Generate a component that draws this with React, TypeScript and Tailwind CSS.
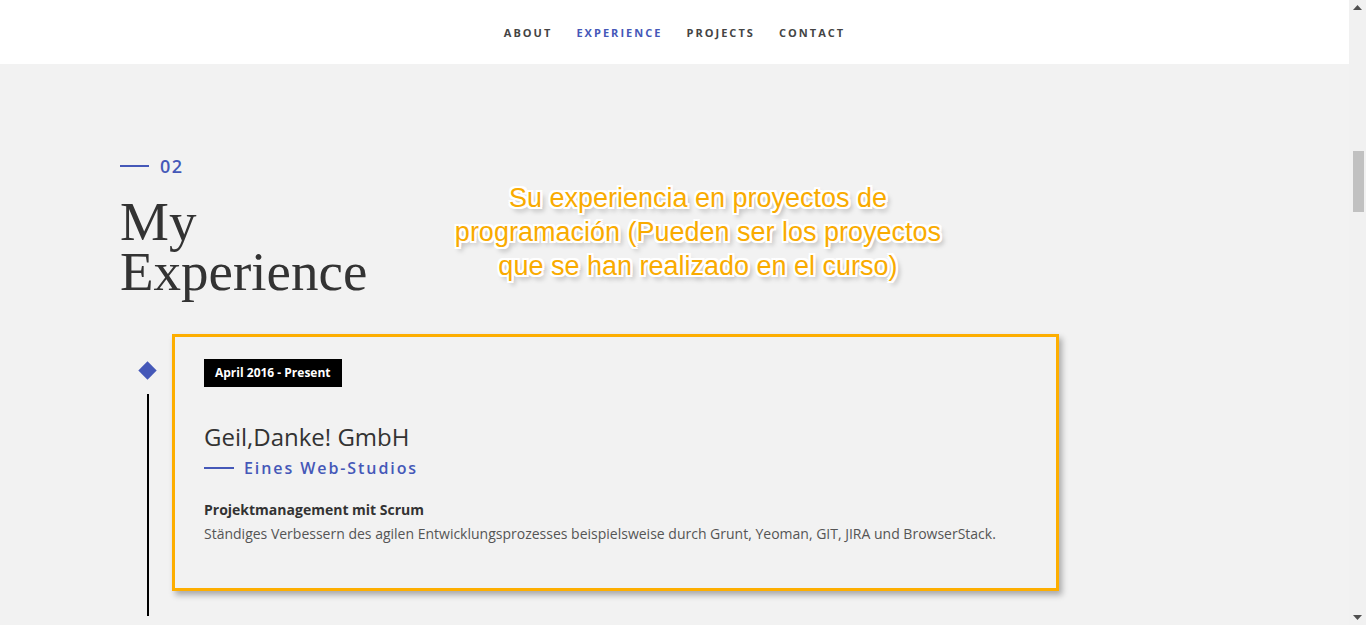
const sans = "font-['Open_Sans',sans-serif]";

const NAV = ["About", "Experience", "Projects", "Contact"];

function Scrollbar() {
  return (
    <div className="w-[17px] h-full bg-[#f1f1f1] flex flex-col items-center justify-between py-[5px] shrink-0">
      <svg width="9" height="5" viewBox="0 0 9 5"><path d="M0 5 L4.5 0 L9 5 Z" fill="#505050" /></svg>
      <div className="flex-1 w-full relative">
        <div className="absolute left-[4px] right-[2px] top-[141px] h-[61px] bg-[#c1c1c1]" />
      </div>
      <svg width="9" height="5" viewBox="0 0 9 5"><path d="M0 0 L4.5 5 L9 0 Z" fill="#505050" /></svg>
    </div>
  );
}

export default function App() {
  return (
    <div className={`w-[1366px] h-[625px] overflow-hidden flex bg-[#f2f2f2] ${sans}`}>
      <div className="flex-1 flex flex-col">
        {/* Top nav */}
        <nav className="h-[64px] bg-white flex items-center justify-center gap-[24px] pt-[2px]">
          {NAV.map((n) => (
            <a
              key={n}
              className={`text-[11px] font-bold uppercase tracking-[0.185em] ${n === "Experience" ? "text-[#4558b8]" : "text-[#444]"}`}
            >
              {n}
            </a>
          ))}
        </nav>

        <section className="relative pl-[120px] pt-[93px]">
          <div className="flex items-center gap-[11px]">
            <span className="w-[29px] h-[2px] bg-[#4558b8]" />
            <span className="text-[18px] text-[#4558b8] tracking-[0.08em] font-semibold leading-none">02</span>
          </div>
          <h2 className="mt-[22px] font-['Liberation_Serif',serif] text-[#333] text-[55px] leading-[50px]">
            My
            <br />
            Experience
          </h2>

          {/* annotation note */}
          <p className="absolute left-[418px] top-[117px] w-[560px] text-center font-['Liberation_Sans',Arial,sans-serif] text-[27px] leading-[34px] text-[#f9ab00] [text-shadow:-2px_-2px_0_#fff,2px_-2px_0_#fff,-2px_2px_0_#fff,2px_2px_0_#fff,0_2px_0_#fff,2px_0_0_#fff,-2px_0_0_#fff,0_-2px_0_#fff,3px_4px_5px_rgba(0,0,0,0.35)]">
            Su experiencia en proyectos de
            <br />
            programación (Pueden ser los proyectos
            <br />
            que se han realizado en el curso)
          </p>

          {/* Timeline */}
          <div className="mt-[37px] flex">
            <div className="w-[52px] flex flex-col items-center pt-[30px] pl-[3px]">
              <span className="w-[13px] h-[13px] bg-[#4558b8] rotate-45" />
              <span className="mt-[17px] w-[2px] h-[222px] bg-black" />
            </div>
            <div className="w-[887px] h-[257px] border-[3px] border-[#fdae00] shadow-[3px_4px_6px_rgba(0,0,0,0.3)] pl-[29px] pt-[22px]">
              <span className="inline-block bg-black text-white text-[12px] font-bold px-[11px] leading-[28px]">
                April 2016 - Present
              </span>
              <h3 className="mt-[35px] text-[24px] text-[#333] leading-[30px]">Geil,Danke! GmbH</h3>
              <div className="mt-[4px] flex items-center gap-[10px]">
                <span className="w-[30px] h-[2px] bg-[#4558b8]" />
                <span className="text-[16px] font-semibold tracking-[0.12em] text-[#4558b8]">Eines Web-Studios</span>
              </div>
              <p className="mt-[18px] text-[14px] font-bold text-[#333] leading-[24px]">Projektmanagement mit Scrum</p>
              <p className="text-[14px] text-[#555] leading-[24px]">
                Ständiges Verbessern des agilen Entwicklungsprozesses beispielsweise durch Grunt, Yeoman, GIT, JIRA und BrowserStack.
              </p>
            </div>
          </div>
        </section>
      </div>
      <Scrollbar />
    </div>
  );
}
